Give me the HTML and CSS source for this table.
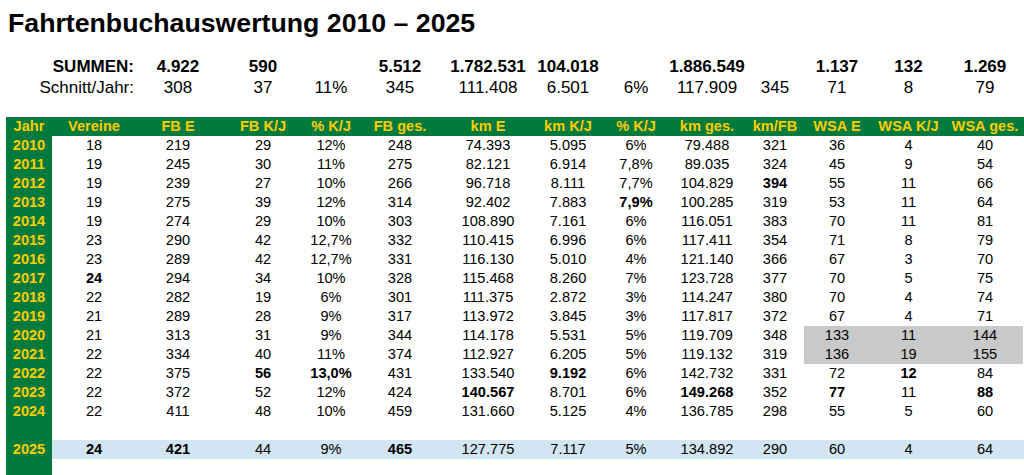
FILE: index.html
```html
<!DOCTYPE html>
<html lang="de">
<head>
<meta charset="utf-8">
<title>Fahrtenbuchauswertung 2010 – 2025</title>
<link rel="stylesheet" href="styles.css">
</head>
<body>
<div class="page">
  <h1 class="title">Fahrtenbuchauswertung 2010 – 2025</h1>

  <div class="summary">
    <div class="row sum-row b">
      <div class="label">SUMMEN:</div>
      <div>4.922</div><div>590</div><div></div><div>5.512</div>
      <div>1.782.531</div><div>104.018</div><div></div><div>1.886.549</div><div></div>
      <div>1.137</div><div>132</div><div>1.269</div>
    </div>
    <div class="row sum-row">
      <div class="label">Schnitt/Jahr:</div>
      <div>308</div><div>37</div><div>11%</div><div>345</div>
      <div>111.408</div><div>6.501</div><div>6%</div><div>117.909</div><div>345</div>
      <div>71</div><div>8</div><div>79</div>
    </div>
  </div>

  <div class="table">
    <div class="row head">
      <div>Jahr</div><div>Vereine</div><div>FB E</div><div>FB K/J</div><div>% K/J</div><div>FB ges.</div>
      <div>km E</div><div>km K/J</div><div>% K/J</div><div>km ges.</div><div>km/FB</div>
      <div>WSA E</div><div>WSA K/J</div><div>WSA ges.</div>
    </div>
    <div class="row">
      <div class="year">2010</div><div>18</div><div>219</div><div>29</div><div>12%</div><div>248</div>
      <div>74.393</div><div>5.095</div><div>6%</div><div>79.488</div><div>321</div><div>36</div><div>4</div><div>40</div>
    </div>
    <div class="row">
      <div class="year">2011</div><div>19</div><div>245</div><div>30</div><div>11%</div><div>275</div>
      <div>82.121</div><div>6.914</div><div>7,8%</div><div>89.035</div><div>324</div><div>45</div><div>9</div><div>54</div>
    </div>
    <div class="row">
      <div class="year">2012</div><div>19</div><div>239</div><div>27</div><div>10%</div><div>266</div>
      <div>96.718</div><div>8.111</div><div>7,7%</div><div>104.829</div><div class="b">394</div><div>55</div><div>11</div><div>66</div>
    </div>
    <div class="row">
      <div class="year">2013</div><div>19</div><div>275</div><div>39</div><div>12%</div><div>314</div>
      <div>92.402</div><div>7.883</div><div class="b">7,9%</div><div>100.285</div><div>319</div><div>53</div><div>11</div><div>64</div>
    </div>
    <div class="row">
      <div class="year">2014</div><div>19</div><div>274</div><div>29</div><div>10%</div><div>303</div>
      <div>108.890</div><div>7.161</div><div>6%</div><div>116.051</div><div>383</div><div>70</div><div>11</div><div>81</div>
    </div>
    <div class="row">
      <div class="year">2015</div><div>23</div><div>290</div><div>42</div><div>12,7%</div><div>332</div>
      <div>110.415</div><div>6.996</div><div>6%</div><div>117.411</div><div>354</div><div>71</div><div>8</div><div>79</div>
    </div>
    <div class="row">
      <div class="year">2016</div><div>23</div><div>289</div><div>42</div><div>12,7%</div><div>331</div>
      <div>116.130</div><div>5.010</div><div>4%</div><div>121.140</div><div>366</div><div>67</div><div>3</div><div>70</div>
    </div>
    <div class="row">
      <div class="year">2017</div><div class="b">24</div><div>294</div><div>34</div><div>10%</div><div>328</div>
      <div>115.468</div><div>8.260</div><div>7%</div><div>123.728</div><div>377</div><div>70</div><div>5</div><div>75</div>
    </div>
    <div class="row">
      <div class="year">2018</div><div>22</div><div>282</div><div>19</div><div>6%</div><div>301</div>
      <div>111.375</div><div>2.872</div><div>3%</div><div>114.247</div><div>380</div><div>70</div><div>4</div><div>74</div>
    </div>
    <div class="row">
      <div class="year">2019</div><div>21</div><div>289</div><div>28</div><div>9%</div><div>317</div>
      <div>113.972</div><div>3.845</div><div>3%</div><div>117.817</div><div>372</div><div>67</div><div>4</div><div>71</div>
    </div>
    <div class="row">
      <div class="year">2020</div><div>21</div><div>313</div><div>31</div><div>9%</div><div>344</div>
      <div>114.178</div><div>5.531</div><div>5%</div><div>119.709</div><div>348</div>
      <div class="gray">133</div><div class="gray">11</div><div class="gray">144</div>
    </div>
    <div class="row">
      <div class="year">2021</div><div>22</div><div>334</div><div>40</div><div>11%</div><div>374</div>
      <div>112.927</div><div>6.205</div><div>5%</div><div>119.132</div><div>319</div>
      <div class="gray">136</div><div class="gray">19</div><div class="gray">155</div>
    </div>
    <div class="row">
      <div class="year">2022</div><div>22</div><div>375</div><div class="b">56</div><div class="b">13,0%</div><div>431</div>
      <div>133.540</div><div class="b">9.192</div><div>6%</div><div>142.732</div><div>331</div><div>72</div><div class="b">12</div><div>84</div>
    </div>
    <div class="row">
      <div class="year">2023</div><div>22</div><div>372</div><div>52</div><div>12%</div><div>424</div>
      <div class="b">140.567</div><div>8.701</div><div>6%</div><div class="b">149.268</div><div>352</div><div class="b">77</div><div>11</div><div class="b">88</div>
    </div>
    <div class="row">
      <div class="year">2024</div><div>22</div><div>411</div><div>48</div><div>10%</div><div>459</div>
      <div>131.660</div><div>5.125</div><div>4%</div><div>136.785</div><div>298</div><div>55</div><div>5</div><div>60</div>
    </div>
    <div class="row">
      <div class="year"></div>
    </div>
    <div class="row current">
      <div class="year">2025</div><div class="b">24</div><div class="b">421</div><div>44</div><div>9%</div><div class="b">465</div>
      <div>127.775</div><div>7.117</div><div>5%</div><div>134.892</div><div>290</div><div>60</div><div>4</div><div>64</div>
    </div>
    <div class="row filler">
      <div class="year"></div>
    </div>
  </div>
</div>
</body>
</html>
```

FILE: styles.css
```css
html, body {
  margin: 0;
  padding: 0;
  overflow: hidden;
  background: #ffffff;
}

body {
  font-family: "Liberation Sans", Arial, sans-serif;
  color: #000000;
}

.page {
  width: 1024px;
  height: 475px;
  padding-left: 6px;
  box-sizing: border-box;
}

.title {
  margin: 0;
  padding-top: 8px;
  padding-left: 2px;
  font-size: 26.7px;
  line-height: 30px;
  font-weight: bold;
}

.row {
  display: grid;
  grid-template-columns: 46px 84px 84px 86px 50px 88px 88px 72px 64px 78px 58px 66px 77px 76px;
  font-size: 14.6px;
  line-height: 19px;
  height: 19px;
}

.row > div {
  text-align: center;
  white-space: nowrap;
}

.b {
  font-weight: bold;
}

.summary {
  margin-top: 18px;
}

.sum-row {
  height: 21px;
  line-height: 21px;
  font-size: 17px;
}

.sum-row .label {
  grid-column: span 2;
  text-align: right;
  padding-right: 2px;
}

.table {
  margin-top: 19px;
}

.head {
  background: #007a3d;
  color: #ffcc00;
  font-weight: bold;
}

.year {
  background: #007a3d;
  color: #ffcc00;
  font-weight: bold;
}

.gray {
  background: #c9c9c9;
}

.current {
  background: #d2e5f2;
}

.current > .year {
  background: #007a3d;
}

.filler {
  height: 16px;
}
```
